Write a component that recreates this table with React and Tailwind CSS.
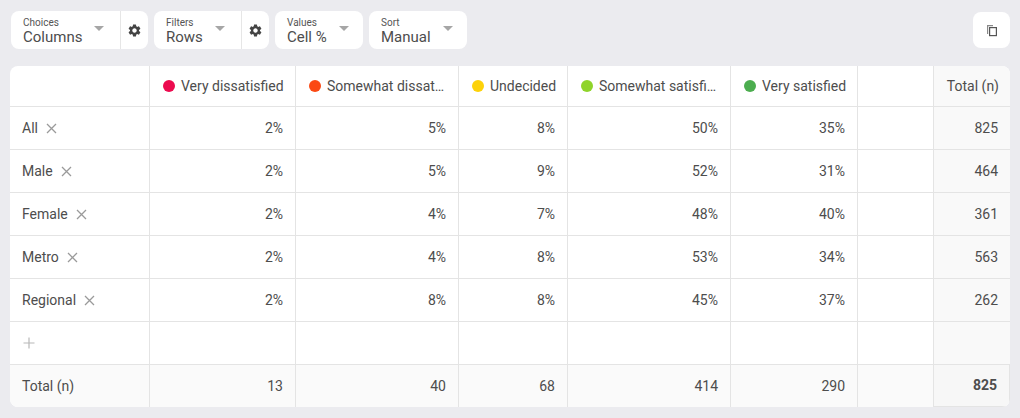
import React from "react";
import { MdSettings } from "react-icons/md";

const cols = [
  { label: "Very dissatisfied", color: "bg-[#ec0b4f]" },
  { label: "Somewhat dissat…", color: "bg-[#fb4913]" },
  { label: "Undecided", color: "bg-[#fdd20a]" },
  { label: "Somewhat satisfi…", color: "bg-[#8fd42b]" },
  { label: "Very satisfied", color: "bg-[#4cad4f]" },
];

const rows = [
  { name: "All", vals: ["2%", "5%", "8%", "50%", "35%"], total: 825 },
  { name: "Male", vals: ["2%", "5%", "9%", "52%", "31%"], total: 464 },
  { name: "Female", vals: ["2%", "4%", "7%", "48%", "40%"], total: 361 },
  { name: "Metro", vals: ["2%", "4%", "8%", "53%", "34%"], total: 563 },
  { name: "Regional", vals: ["2%", "8%", "8%", "45%", "37%"], total: 262 },
];

const totals = [13, 40, 68, 414, 290];

const Caret = () => (
  <svg width="10" height="5" viewBox="0 0 10 5" className="ml-3 mt-[-4px] shrink-0">
    <path d="M0 0h10L5 5z" fill="#a6a6a6" />
  </svg>
);

const Picker = ({ label, value, gear, w }) => (
  <div className={`h-[38px] bg-white rounded-[8px] flex items-stretch ${w}`}>
    <div className="flex items-center pl-3 pr-4 flex-1">
      <div className="flex flex-col leading-none whitespace-nowrap">
        <span className="text-[10px] text-[#555] mt-[2px]">{label}</span>
        <span className="text-[15px] text-[#4d4d4d] mt-[2px]">{value}</span>
      </div>
      <Caret />
    </div>
    {gear && (
      <div className="w-[30px] border-l border-[#e6e6e6] flex items-center justify-center">
        <MdSettings size={15} color="#444" />
      </div>
    )}
  </div>
);

const XIcon = () => (
  <svg width="11" height="11" viewBox="0 0 11 11" className="ml-[8px]">
    <path d="M1 1l9 9M10 1l-9 9" stroke="#9a9a9a" strokeWidth="1.3" />
  </svg>
);

const cell = "border-r border-b border-[#e4e4e4] flex items-center px-3 text-[14px] text-[#4d4d4d] whitespace-nowrap";

export default function App() {
  return (
    <div className="w-[1020px] h-[418px] bg-[#ebebef] font-['Roboto',sans-serif] overflow-hidden relative">
      <div className="flex items-start pt-[11px] px-[11px]">
        <div className="flex gap-[6px]">
          <Picker label="Choices" value="Columns" gear w="w-[137px]" />
          <Picker label="Filters" value="Rows" gear w="w-[115px]" />
          <Picker label="Values" value="Cell %" w="w-[88px]" />
          <Picker label="Sort" value="Manual" w="w-[98px]" />
        </div>
        <div className="ml-auto mr-[-1px] mt-[1px] w-[37px] h-[36px] bg-white rounded-[8px] flex items-center justify-center">
          <svg width="12" height="13" viewBox="0 0 12 13">
            <path d="M1 1h6v1.2H2.2V10H1z" fill="#8a8a8a" />
            <rect x="3.6" y="3.6" width="6.8" height="8" fill="none" stroke="#555" strokeWidth="1.2" />
          </svg>
        </div>
      </div>

      <div className="mx-[10px] mt-[17px] bg-white rounded-[8px] overflow-hidden grid grid-cols-[140px_146px_163px_109px_163px_127px_76px_76px] grid-rows-[41px_43px_43px_43px_43px_43px_43px_42px]">
        <div className={cell}></div>
        {cols.map((c) => (
          <div key={c.label} className={cell}>
            <span className={`w-[12px] h-[12px] rounded-full ${c.color} mr-[6px] ml-[1px] shrink-0`} />
            <span>{c.label}</span>
          </div>
        ))}
        <div className={cell}></div>
        <div className={`${cell} border-r-0 justify-end bg-[#f9f9f9] px-[11px]`}>Total (n)</div>

        {rows.map((r) => (
          <React.Fragment key={r.name}>
            <div className={cell}>
              {r.name}
              <XIcon />
            </div>
            {r.vals.map((v, i) => (
              <div key={i} className={`${cell} justify-end`}>{v}</div>
            ))}
            <div className={cell}></div>
            <div className={`${cell} border-r-0 justify-end bg-[#f9f9f9]`}>{r.total}</div>
          </React.Fragment>
        ))}

        <div className={cell}>
          <svg width="12" height="12" viewBox="0 0 12 12" className="ml-[1px]">
            <path d="M6 0.5v11M0.5 6h11" stroke="#b8b8b8" strokeWidth="1.2" />
          </svg>
        </div>
        {cols.map((c) => (
          <div key={c.label} className={cell}></div>
        ))}
        <div className={cell}></div>
        <div className={`${cell} border-r-0 bg-[#f9f9f9]`}></div>

        <div className={`${cell} border-b-0 bg-[#fafafa]`}>Total (n)</div>
        {totals.map((t, i) => (
          <div key={i} className={`${cell} border-b-0 justify-end bg-[#fafafa]`}>{t}</div>
        ))}
        <div className={`${cell} border-b-0 bg-[#fafafa]`}></div>
        <div className={`${cell} border-0 justify-end bg-[#f7f7f7] font-bold`}>825</div>
      </div>
    </div>
  );
}
